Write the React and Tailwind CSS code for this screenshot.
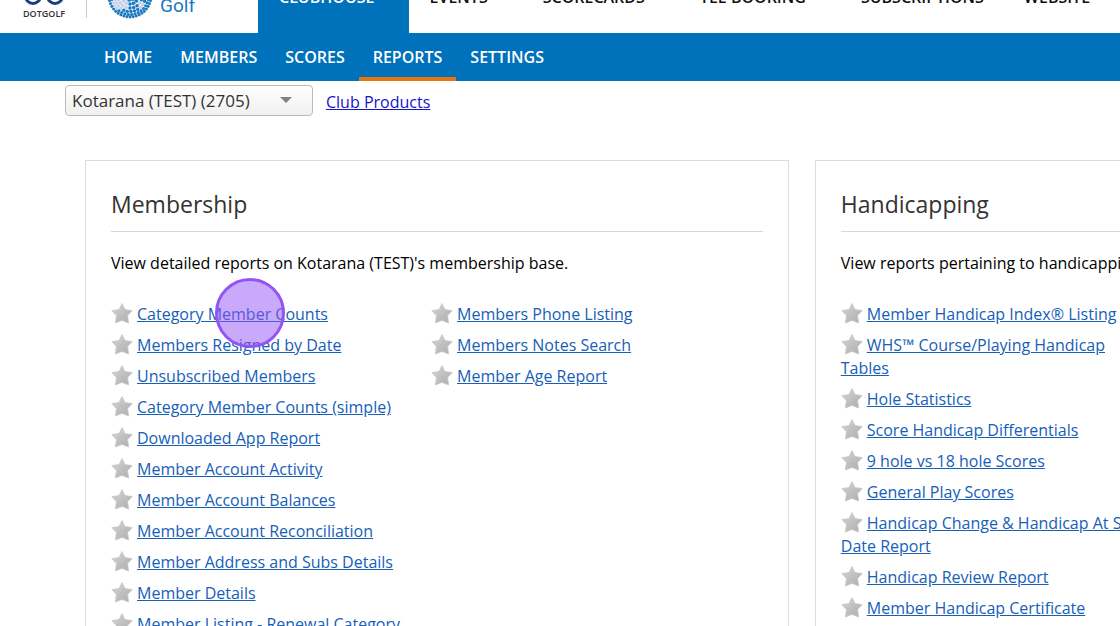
const clubTabs = ["EVENTS", "SCORECARDS", "TEE BOOKING", "SUBSCRIPTIONS", "WEBSITE"];

const sections = ["HOME", "MEMBERS", "SCORES", "REPORTS", "SETTINGS"];

const cards = [
    {
        title: "Membership",
        description: "View detailed reports on Kotarana (TEST)'s membership base.",
        columns: [
            [
                "Category Member Counts",
                "Members Resigned by Date",
                "Unsubscribed Members",
                "Category Member Counts (simple)",
                "Downloaded App Report",
                "Member Account Activity",
                "Member Account Balances",
                "Member Account Reconciliation",
                "Member Address and Subs Details",
                "Member Details",
                "Member Listing - Renewal Category",
            ],
            ["Members Phone Listing", "Members Notes Search", "Member Age Report"],
        ],
    },
    {
        title: "Handicapping",
        description: "View reports pertaining to handicapping.",
        columns: [
            [
                "Member Handicap Index® Listing",
                "WHS™ Course/Playing Handicap Tables",
                "Hole Statistics",
                "Score Handicap Differentials",
                "9 hole vs 18 hole Scores",
                "General Play Scores",
                "Handicap Change & Handicap At Set Date Report",
                "Handicap Review Report",
                "Member Handicap Certificate",
            ],
        ],
    },
];

// Dimples of the golf ball, in rings around its centre at (23, -4)
const dimples = [4, 8, 12, 15.5, 18.5, 21].flatMap((radius, ring) => {
    const count = [7, 14, 20, 27, 34, 42][ring];
    return Array.from({ length: count }, (_, i) => {
        const angle = ((i + (ring % 2) / 2) / count) * Math.PI * 2;
        const x = 23 + Math.cos(angle) * radius;
        const y = -4 + Math.sin(angle) * radius;
        const pale = (x < 20 && x > 5 && y < 9) || (x > 31 && x < 38 && y > 2 && y < 8);
        return { x, y, r: 1.9 - ring * 0.09, pale };
    });
});

function DotGolfLogo() {
    return (
        <div className="flex w-[42px] flex-col">
            <svg viewBox="0 0 42 9" className="h-[9px] w-full" aria-hidden="true">
                <circle cx="10" cy="-4" r="7.5" fill="none" stroke="#1d3f7d" strokeWidth="3" />
                <circle cx="32" cy="-4" r="7.5" fill="none" stroke="#1d3f7d" strokeWidth="3" />
            </svg>
            <span className="text-[9px] leading-[10px] font-semibold text-[#333]">DOTGOLF</span>
        </div>
    );
}

function GolfBallLogo() {
    return (
        <svg viewBox="0 0 46 19" className="h-[19px] w-[46px]" aria-hidden="true">
            <circle cx="23" cy="-4" r="22.5" fill="#e6f0f8" />
            {dimples.map((dimple, i) => (
                <circle key={i} cx={dimple.x} cy={dimple.y} r={dimple.r} fill={dimple.pale ? "#c3cfea" : "#1a78bf"} />
            ))}
        </svg>
    );
}

function StarIcon() {
    return (
        <svg viewBox="0 0 22 22" className="mr-1 inline-block h-[22px] w-[22px] align-[-5px]" aria-hidden="true">
            <defs>
                <linearGradient id="star" x1="0" y1="0" x2="1" y2="1">
                    <stop offset="0" stopColor="#d8d8d8" />
                    <stop offset="0.5" stopColor="#c0c0c0" />
                    <stop offset="1" stopColor="#adadad" />
                </linearGradient>
            </defs>
            <path
                d="M11 0.6 L14 6.6 L21.2 7.6 L16.6 12.6 L17.6 20 L11 17.4 L4.4 20 L5.4 12.6 L0.8 7.6 L8 6.6 Z"
                fill="url(#star)"
                stroke="#c8c8c8"
                strokeWidth="0.8"
                strokeLinejoin="round"
            />
        </svg>
    );
}

function ReportCard({ card }) {
    return (
        <section className="w-[68%] shrink-0 border border-[#dcdcdc] px-[25px] pt-[25px] pb-6">
            <h2 className="border-b border-[#d8d8d8] pb-[9px] text-[23px] leading-9 text-[#333]">{card.title}</h2>
            <p className="mt-[19px] mb-7 leading-6 text-black">{card.description}</p>
            <div className="flex">
                {card.columns.map((reports, i) => (
                    <ul key={i} className="flex w-80 shrink-0 flex-col gap-2 pr-2">
                        {reports.map((report) => (
                            <li key={report} className="leading-[23px]">
                                <StarIcon />
                                <a href="#" className="text-[#1660b8] underline">{report}</a>
                            </li>
                        ))}
                    </ul>
                ))}
            </div>
        </section>
    );
}

export default function App() {
    return (
        <div className="relative h-screen overflow-hidden bg-white font-['Open_Sans','Noto_Sans',sans-serif] text-base">
            {/* Top bar */}
            <header className="flex h-[33px] overflow-hidden">
                <div className="flex w-[258px] shrink-0 items-start pl-[23px]">
                    <DotGolfLogo />
                    <div className="mr-5 ml-[21px] h-[18px] w-px bg-[#ccc]" />
                    <GolfBallLogo />
                    <span className="-mt-1 ml-[7px] font-[Roboto,sans-serif] text-[19px] leading-5 text-[#1a78bf]">Golf</span>
                </div>
                <nav className="flex items-end font-semibold whitespace-nowrap">
                    <a href="#" className="bg-[#0071bb] pr-[34px] pb-6 pl-[21px] leading-6 text-white">CLUBHOUSE</a>
                    {clubTabs.map((tab) => (
                        <a key={tab} href="#" className="pr-[34px] pb-6 pl-[21px] leading-6 text-[#111] last:pl-[6px]">
                            {tab}
                        </a>
                    ))}
                </nav>
            </header>

            {/* Section menu */}
            <nav className="flex h-12 bg-[#0071bb] pl-[90px] font-semibold text-white">
                {sections.map((section) => (
                    <a
                        key={section}
                        href="#"
                        className={
                            section === "REPORTS"
                                ? "border-b-4 border-[#e87511] px-[14px] leading-[48px]"
                                : "px-[14px] leading-[48px]"
                        }
                    >
                        {section}
                    </a>
                ))}
            </nav>

            {/* Club picker */}
            <div className="flex items-center pt-1 pl-[65px]">
                <div className="relative">
                    <select
                        aria-label="Club"
                        className="block h-[31px] w-[248px] appearance-none rounded border border-[#bbb] bg-gradient-to-b from-white to-[#f0f0f0] px-[6px] text-[17px] text-[#333]"
                    >
                        <option>Kotarana (TEST) (2705)</option>
                    </select>
                    <svg
                        viewBox="0 0 12 6"
                        className="pointer-events-none absolute top-3 right-[21px] h-[6px] w-3"
                        aria-hidden="true"
                    >
                        <path d="M0 0 H12 L6 6 Z" fill="#808080" />
                    </svg>
                </div>
                <a href="#" className="ml-[13px] pt-[3px] text-[#1414cc] underline">Club Products</a>
            </div>

            <main className="flex gap-[26px] pt-11 pl-[85px]">
                {cards.map((card) => (
                    <ReportCard key={card.title} card={card} />
                ))}
            </main>

            {/* Click marker */}
            <div className="pointer-events-none absolute top-[278px] left-[215px] h-[70px] w-[70px] rounded-full border-[3px] border-[#9353f5] bg-[#9353f5]/50" />
        </div>
    );
}
